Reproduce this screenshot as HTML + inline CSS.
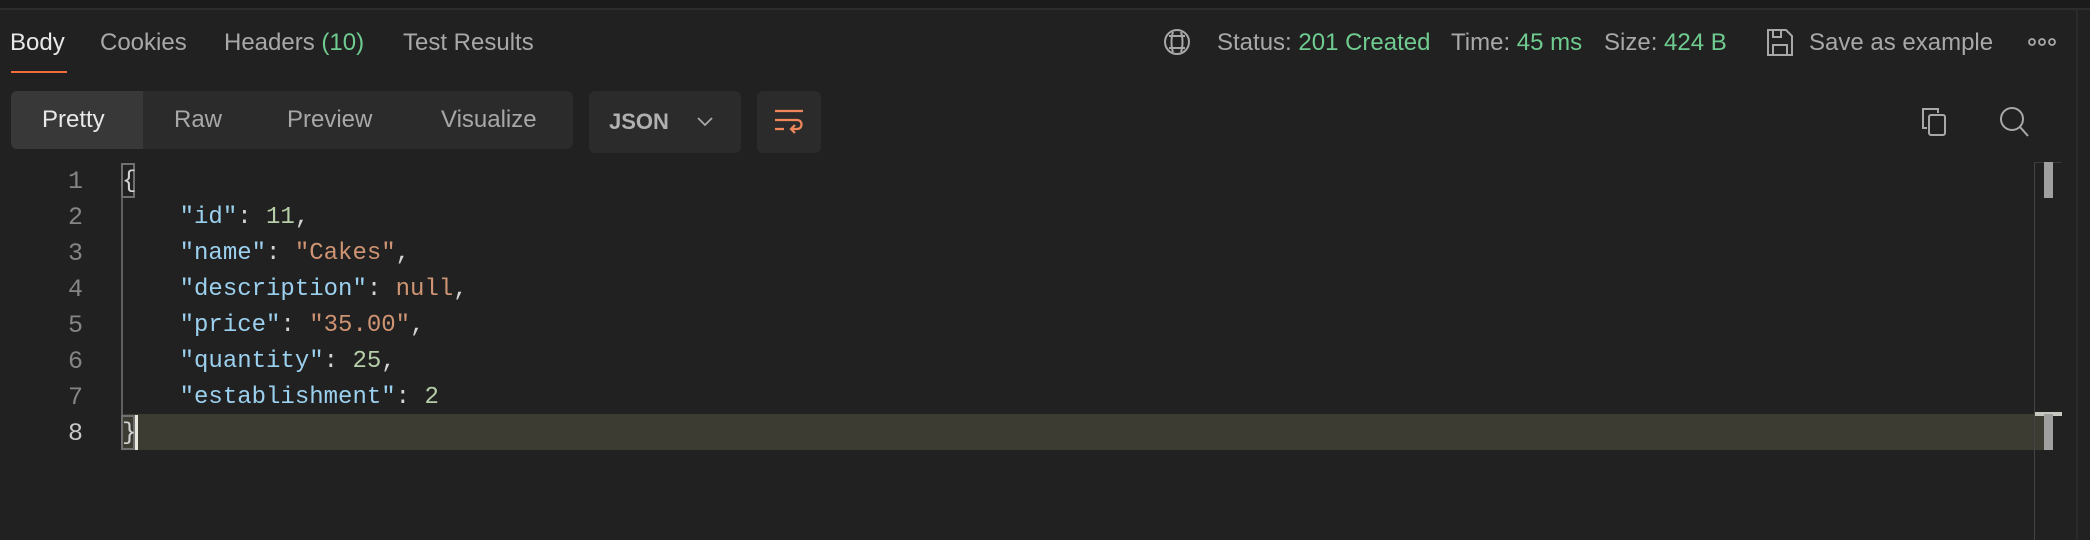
<!DOCTYPE html>
<html><head><meta charset="utf-8"><style>
*{margin:0;padding:0;box-sizing:border-box}
body{width:2090px;height:540px;background:#212121;overflow:hidden;position:relative;font-family:"Liberation Sans",sans-serif;color:#a8a8a8}
.a{position:absolute;white-space:nowrap}
.t{font-size:24px;top:29px;line-height:28px}
.g{color:#6fcb8f}
.code{font-family:"Liberation Mono",monospace;font-size:24px;line-height:36px}
.code div{white-space:pre}
.k{color:#9cd0ef}.s{color:#cf9473}.n{color:#b5cea8}.p{color:#d4d4d4}
.ln{position:absolute;left:30px;width:53px;text-align:right;font-family:"Liberation Mono",monospace;font-size:25px;line-height:36px;color:#858585}
</style></head><body>
<div class="a" style="left:0;top:0;width:2090px;height:8px;background:#1b1b1b"></div>
<div class="a" style="left:0;top:8px;width:2090px;height:2px;background:#2c2c2c"></div>

<div class="a t" style="left:10px;color:#e8e8e8">Body</div>
<div class="a" style="left:11px;top:71px;width:56px;height:2px;background:#f26b3a"></div>
<div class="a t" style="left:100px">Cookies</div>
<div class="a t" style="left:224px">Headers <span class="g">(10)</span></div>
<div class="a t" style="left:403px">Test Results</div>

<svg class="a" style="left:1163px;top:28px" width="28" height="28" viewBox="0 0 28 28" fill="none" stroke="#a8a8a8" stroke-width="2"><circle cx="14" cy="14" r="12"/><path d="M6 8h16M6 20h16M10 4c-2 6-2 14 0 20M18 4c2 6 2 14 0 20"/></svg>
<div class="a t" style="left:1217px">Status: <span class="g">201 Created</span></div>
<div class="a t" style="left:1451px">Time: <span class="g">45 ms</span></div>
<div class="a t" style="left:1604px">Size: <span class="g">424 B</span></div>
<svg class="a" style="left:1766px;top:28px" width="28" height="29" viewBox="0 0 28 29" fill="none" stroke="#a8a8a8" stroke-width="2"><path d="M2 2h18l6 6v19H2z M7 2v7h8V2 M7 27v-10h14v10"/></svg>
<div class="a t" style="left:1809px">Save as example</div>
<svg class="a" style="left:2028px;top:37px" width="28" height="10" viewBox="0 0 28 10" fill="none" stroke="#a8a8a8" stroke-width="1.8"><circle cx="4" cy="5" r="3"/><circle cx="14" cy="5" r="3"/><circle cx="24" cy="5" r="3"/></svg>

<div class="a" style="left:11px;top:91px;width:562px;height:58px;background:#2b2b2b;border-radius:6px;overflow:hidden">
 <div class="a" style="left:0;top:0;width:132px;height:58px;background:#383838"></div>
</div>
<div class="a t" style="top:106px;left:42px;color:#e8e8e8">Pretty</div>
<div class="a t" style="top:106px;left:174px">Raw</div>
<div class="a t" style="top:106px;left:287px">Preview</div>
<div class="a t" style="top:106px;left:441px">Visualize</div>
<div class="a" style="left:589px;top:91px;width:152px;height:62px;background:#2b2b2b;border-radius:6px"></div>
<div class="a" style="left:609px;top:109px;font-size:22px;font-weight:bold;color:#b0b0b0">JSON</div>
<svg class="a" style="left:697px;top:117px" width="16" height="10" viewBox="0 0 16 10" fill="none" stroke="#a8a8a8" stroke-width="1.8"><path d="M1 1l7 7 7-7"/></svg>
<div class="a" style="left:757px;top:91px;width:64px;height:62px;background:#2b2b2b;border-radius:6px"></div>
<svg class="a" style="left:773px;top:108px" width="32" height="30" viewBox="0 0 32 30" fill="none" stroke="#f0875a" stroke-width="2.2"><path d="M2 3h28M2 12h22c6 0 6 9 0 9h-6M22 17l-4 4 4 4M2 21h9"/></svg>

<svg class="a" style="left:1919px;top:106px" width="32" height="31" viewBox="0 0 32 31" fill="none" stroke="#a8a8a8" stroke-width="2"><path d="M8 22H4V3h15v4"/><rect x="10" y="9" width="16" height="20" rx="2"/></svg>
<svg class="a" style="left:1999px;top:106px" width="32" height="32" viewBox="0 0 32 32" fill="none" stroke="#a8a8a8" stroke-width="2"><circle cx="13" cy="13" r="11"/><path d="M21 21l8 9"/></svg>

<div class="a" style="left:121px;top:414px;width:1932px;height:36px;background:#3c3c33"></div>
<div class="a" style="left:121px;top:163px;width:2px;height:287px;background:#606060"></div>
<div class="a" style="left:121px;top:163px;width:14px;height:35px;border:2px solid #707070"></div>
<div class="a" style="left:121px;top:415px;width:14px;height:35px;border:2px solid #707070"></div>
<div class="a" style="left:135px;top:415px;width:3px;height:35px;background:#e8e8e0"></div>

<div class="ln" style="top:164px">1</div>
<div class="ln" style="top:200px">2</div>
<div class="ln" style="top:236px">3</div>
<div class="ln" style="top:272px">4</div>
<div class="ln" style="top:308px">5</div>
<div class="ln" style="top:344px">6</div>
<div class="ln" style="top:380px">7</div>
<div class="ln" style="top:416px;color:#c6c6c6">8</div>

<div class="a code" style="left:122px;top:164px">
<div class="p">{</div>
<div>    <span class="k">"id"</span><span class="p">: </span><span class="n">11</span><span class="p">,</span></div>
<div>    <span class="k">"name"</span><span class="p">: </span><span class="s">"Cakes"</span><span class="p">,</span></div>
<div>    <span class="k">"description"</span><span class="p">: </span><span class="s">null</span><span class="p">,</span></div>
<div>    <span class="k">"price"</span><span class="p">: </span><span class="s">"35.00"</span><span class="p">,</span></div>
<div>    <span class="k">"quantity"</span><span class="p">: </span><span class="n">25</span><span class="p">,</span></div>
<div>    <span class="k">"establishment"</span><span class="p">: </span><span class="n">2</span></div>
<div class="p">}</div>
</div>

<div class="a" style="left:2034px;top:162px;width:1px;height:378px;background:#444"></div>
<div class="a" style="left:2034px;top:162px;width:27px;height:1px;background:#3a3a3a"></div>
<div class="a" style="left:2044px;top:162px;width:9px;height:36px;background:#a0a0a0"></div>
<div class="a" style="left:2035px;top:412px;width:27px;height:4px;background:#c8c8c0"></div>
<div class="a" style="left:2044px;top:414px;width:9px;height:36px;background:#a0a0a0"></div>
<div class="a" style="left:2076px;top:10px;width:2px;height:530px;background:#2a2a2a"></div>
</body></html>
